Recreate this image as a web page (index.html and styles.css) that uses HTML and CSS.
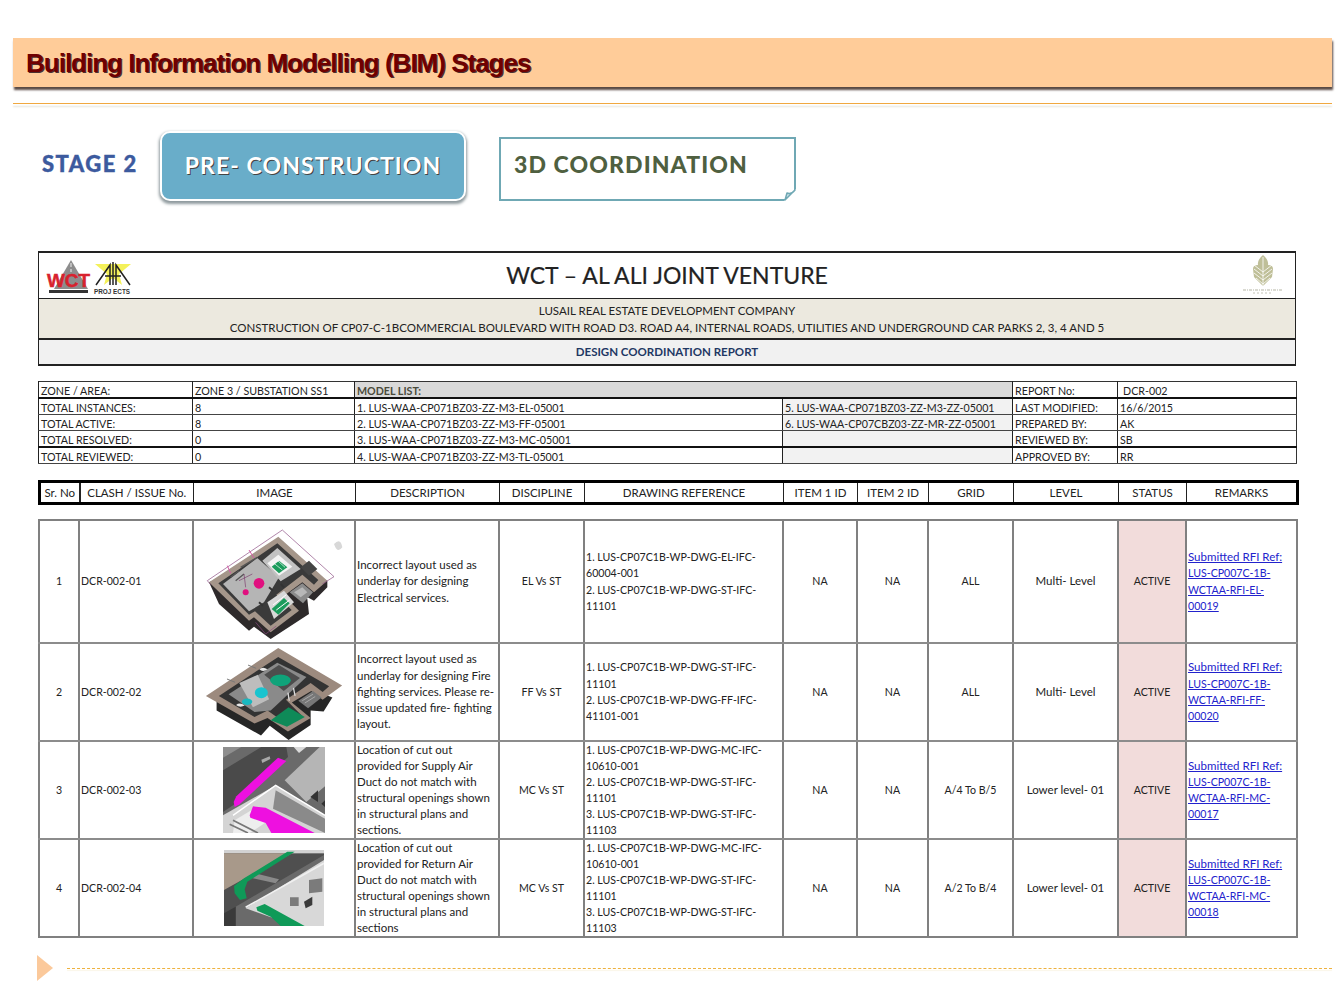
FILE: index.html
```html
<!DOCTYPE html>
<html lang="en">
<head>
    <meta charset="UTF-8">
    <title>Building Information Modelling (BIM) Stages</title>
    <link rel="stylesheet" href="styles.css">
</head>
<body>
    <div class="title-band">
        <h1>Building Information Modelling (BIM) Stages</h1>
    </div>
    <div class="title-rule"></div>

    <div class="stage-row">
        <div class="stage-label">STAGE 2</div>
        <div class="stage-pill">PRE- CONSTRUCTION</div>
        <div class="stage-note">
            3D COORDINATION
            <svg class="note-fold" width="12" height="12" viewBox="0 0 12 12">
                <path d="M0 12 L12 0 L12 12 Z" fill="#fff"/>
                <path d="M1 11 L3 4 Q7 6 11 1 Z" fill="#cfe3e8" stroke="#6fa8b4" stroke-width="1.5" stroke-linejoin="round"/>
            </svg>
        </div>
    </div>

    <div class="report">
        <div class="report-head">
            <div class="head-top">
                <div class="logos">
                    <svg width="92" height="38" viewBox="0 0 92 38">
                        <path d="M28 3 L45 32 L11 32 Z" fill="#8d8d8d"/>
                        <path d="M27.500 6 h1 v4 h-1 z M27.500 12 h1 v3 h-1 z" fill="#eee"/>
                        <text x="4" y="30" class="wct-mark" textLength="43" lengthAdjust="spacingAndGlyphs">WCT</text>
                        <rect x="6" y="33" width="39" height="3" fill="#333"/>
                        <path d="M52 7 L88 7 L76 17 L79 28 L70 21 L61 28 L64 17 Z" fill="#f4f15a"/>
                        <path d="M53 28 L67 8 L67 28 M73 28 L73 8 L87 28 M62 19 L78 19 M70 5 V28" fill="none" stroke="#222" stroke-width="1.5"/>
                        <text x="51" y="37" class="aha-mark" textLength="36" lengthAdjust="spacingAndGlyphs">PROJ ECTS</text>
                    </svg>
                </div>
                <div class="head-title">WCT – AL ALI JOINT VENTURE</div>
                <div class="palm-logo">
                    <svg width="46" height="42" viewBox="0 0 46 42">
                        <path d="M23 0 Q29 5 28 10 Q33 10 33 14 L32 22 L23 31 L14 22 L13 14 Q13 10 18 10 Q17 5 23 0 Z" fill="#bfbf98"/>
                        <path d="M23 2 V31 M14 10 L23 17 L32 10 M14 14 L23 21 L32 14 M14 18 L23 25 L32 18 M16 23 L23 29 L30 23" fill="none" stroke="#fff" stroke-width="0.8"/>
                        <path d="M3 35 H43" stroke="#b5b5a5" stroke-width="1" stroke-dasharray="3 1 1 1"/>
                        <path d="M13 38 H33" stroke="#c5c5b8" stroke-width="1" stroke-dasharray="2 2"/>
                    </svg>
                </div>
            </div>
            <div class="head-sub">
                LUSAIL REAL ESTATE DEVELOPMENT COMPANY<br>
                CONSTRUCTION OF CP07-C-1BCOMMERCIAL BOULEVARD WITH ROAD D3. ROAD A4, INTERNAL ROADS, UTILITIES AND UNDERGROUND CAR PARKS 2, 3, 4 AND 5
            </div>
            <div class="head-doc">DESIGN COORDINATION REPORT</div>
        </div>

        <table class="meta">
            <colgroup>
                <col class="m-a"><col class="m-b"><col class="m-c"><col class="m-d"><col class="m-e"><col class="m-f">
            </colgroup>
            <tr class="thick">
                <td>ZONE / AREA:</td>
                <td>ZONE 3 / SUBSTATION SS1</td>
                <td colspan="2" class="model-title">MODEL LIST:</td>
                <td>REPORT No:</td>
                <td class="indent">DCR-002</td>
            </tr>
            <tr>
                <td>TOTAL INSTANCES:</td>
                <td>8</td>
                <td>1. LUS-WAA-CP071BZ03-ZZ-M3-EL-05001</td>
                <td class="shade">5. LUS-WAA-CP071BZ03-ZZ-M3-ZZ-05001</td>
                <td>LAST MODIFIED:</td>
                <td>16/6/2015</td>
            </tr>
            <tr>
                <td>TOTAL ACTIVE:</td>
                <td>8</td>
                <td>2. LUS-WAA-CP071BZ03-ZZ-M3-FF-05001</td>
                <td class="shade">6. LUS-WAA-CP07CBZ03-ZZ-MR-ZZ-05001</td>
                <td>PREPARED BY:</td>
                <td>AK</td>
            </tr>
            <tr class="thick">
                <td>TOTAL RESOLVED:</td>
                <td>0</td>
                <td>3. LUS-WAA-CP071BZ03-ZZ-M3-MC-05001</td>
                <td class="shade"></td>
                <td>REVIEWED BY:</td>
                <td>SB</td>
            </tr>
            <tr>
                <td>TOTAL REVIEWED:</td>
                <td>0</td>
                <td>4. LUS-WAA-CP071BZ03-ZZ-M3-TL-05001</td>
                <td class="shade"></td>
                <td>APPROVED BY:</td>
                <td>RR</td>
            </tr>
        </table>

        <table class="grid-head">
            <colgroup>
                <col class="c1"><col class="c2"><col class="c3"><col class="c4"><col class="c5"><col class="c6"><col class="c7"><col class="c8"><col class="c9"><col class="c10"><col class="c11"><col class="c12">
            </colgroup>
            <tr>
                <th>Sr. No</th>
                <th>CLASH / ISSUE No.</th>
                <th>IMAGE</th>
                <th>DESCRIPTION</th>
                <th>DISCIPLINE</th>
                <th>DRAWING REFERENCE</th>
                <th>ITEM 1 ID</th>
                <th>ITEM 2 ID</th>
                <th>GRID</th>
                <th>LEVEL</th>
                <th>STATUS</th>
                <th>REMARKS</th>
            </tr>
        </table>

        <table class="grid-body">
            <colgroup>
                <col class="c1"><col class="c2"><col class="c3"><col class="c4"><col class="c5"><col class="c6"><col class="c7"><col class="c8"><col class="c9"><col class="c10"><col class="c11"><col class="c12">
            </colgroup>
            <tr class="row-a">
                <td>1</td>
                <td class="left">DCR-002-01</td>
                <td class="pic">
                    <svg width="150" height="115" viewBox="0 0 450 345">
                        <path d="M30 175 L60 240 L150 320 L165 308 L215 345 L330 270 L325 225 L290 200 L345 230 L385 190 L385 170 L240 100 Z" fill="#2e2a2b"/>
                        <path d="M238 38 L385 170 L345 205 L310 175 L255 215 L300 260 L215 325 L165 280 L150 290 L30 175 Z" fill="#a5968a"/>
                        <path d="M235 58 L358 168 L345 182 L310 152 L232 212 L278 258 L215 305 L168 262 L150 272 L58 178 Z" fill="#3a3a3a"/>
                        <path d="M175 102 L240 160 L195 235 L150 262 L72 180 Z" fill="#b5b5b5"/>
                        <path d="M190 110 L235 72 L305 135 L245 172 Z" fill="#c2c2c2"/>
                        <path d="M205 118 L238 92 L280 128 L240 155 Z" fill="#f4f4f4"/>
                        <path d="M218 128 L240 110 L265 130 L240 148 Z" fill="#1b9c5c"/>
                        <path d="M225 118 L250 138 M236 110 L258 130" stroke="#fff" stroke-width="2"/>
                        <path d="M205 235 L255 200 L285 235 L225 285 Z" fill="#d8d8d8"/>
                        <path d="M218 255 L255 222 L272 238 L238 272 Z" fill="#1b9c5c"/>
                        <path d="M222 243 L262 212 M232 258 L272 228" stroke="#fff" stroke-width="3"/>
                        <path d="M272 205 L310 178 L342 205 L312 238 Z" fill="#8b8b8b"/>
                        <path d="M285 205 L310 190 L325 205 L305 220 Z" fill="#b7b7b7"/>
                        <path d="M305 130 L330 110 L355 135 L330 155 Z" fill="#444"/>
                        <path d="M95 160 L120 140 M110 170 L135 150 M125 130 L175 100" stroke="#555" stroke-width="4"/>
                        <path d="M210 190 L222 200 M245 180 L255 190 M180 235 L192 245" stroke="#333" stroke-width="6"/>
                        <circle cx="180" cy="178" r="16" fill="#e0107f"/>
                        <circle cx="140" cy="205" r="9" fill="#e0107f"/>
                        <path d="M120 170 L160 150 M135 150 L140 190" stroke="#7c3b6d" stroke-width="2"/>
                        <path d="M25 170 L250 18 L405 158 L370 180 M25 170 L35 182 M170 295 L200 330 L232 306" fill="none" stroke="#8a4a80" stroke-width="2"/>
                        <path d="M150 78 L165 102 M85 125 L95 148" stroke="#d65aa8" stroke-width="3"/>
                        <path d="M405 60 Q425 40 430 70 Q415 90 405 60 Z" fill="#d8d8d8"/>
                    </svg>
                </td>
                <td class="left txt">Incorrect layout used as<br>underlay for designing<br>Electrical services.</td>
                <td>EL Vs ST</td>
                <td class="left">1. LUS-CP07C1B-WP-DWG-EL-IFC-<br>60004-001<br>2. LUS-CP07C1B-WP-DWG-ST-IFC-<br>11101</td>
                <td>NA</td>
                <td>NA</td>
                <td>ALL</td>
                <td class="txt">Multi- Level</td>
                <td class="status">ACTIVE</td>
                <td class="left"><a href="#"><span class="txt">Submitted RFI Ref:</span><br>LUS-CP007C-1B-<br>WCTAA-RFI-EL-<br>00019</a></td>
            </tr>
            <tr class="row-b">
                <td>2</td>
                <td class="left">DCR-002-02</td>
                <td class="pic">
                    <svg width="146" height="96" viewBox="0 0 450 296">
                        <path d="M48 175 L48 205 L185 282 L212 252 L270 296 L338 250 L338 205 L378 208 L405 165 L240 100 Z" fill="#262626"/>
                        <path d="M238 12 L435 128 L375 172 L340 145 L280 180 L338 228 L268 270 L205 228 L165 245 L15 160 Z" fill="#9c8a7e"/>
                        <path d="M238 40 L395 130 L375 148 L338 120 L262 172 L315 225 L268 250 L205 205 L165 225 L55 160 Z" fill="#333"/>
                        <path d="M85 155 L235 58 L325 102 L215 205 L165 210 Z" fill="#8a8a8a"/>
                        <path d="M195 95 L240 65 L305 105 L255 145 Z" fill="#4d4d4d"/>
                        <path d="M118 120 L175 95 L210 170 L160 195 Z" fill="#bdbdbd"/>
                        <ellipse cx="245" cy="112" rx="32" ry="18" fill="#0fa37a"/>
                        <ellipse cx="186" cy="150" rx="20" ry="17" fill="#19c4cf"/>
                        <ellipse cx="142" cy="178" rx="16" ry="10" fill="#19b8c0"/>
                        <path d="M215 235 L270 195 L320 225 L265 255 Z" fill="#0f8a58"/>
                        <path d="M300 175 L345 145 L372 165 L330 198 Z" fill="#777"/>
                        <path d="M312 175 L345 155 M320 182 L352 162" stroke="#aaa" stroke-width="3"/>
                        <path d="M180 78 Q190 68 205 78 Q190 88 180 78 Z M108 188 Q120 178 135 190 Q120 198 108 188 Z" fill="#e8e8e8"/>
                        <path d="M145 65 L170 75 M80 108 L105 118" stroke="#777" stroke-width="3"/>
                        <path d="M268 150 L272 175 M285 135 L290 160" stroke="#ddd" stroke-width="4"/>
                    </svg>
                </td>
                <td class="left txt">Incorrect layout used as<br>underlay for designing Fire<br>fighting services. Please re-<br>issue updated fire- fighting<br>layout.</td>
                <td>FF Vs ST</td>
                <td class="left">1. LUS-CP07C1B-WP-DWG-ST-IFC-<br>11101<br>2. LUS-CP07C1B-WP-DWG-FF-IFC-<br>41101-001</td>
                <td>NA</td>
                <td>NA</td>
                <td>ALL</td>
                <td class="txt">Multi- Level</td>
                <td class="status">ACTIVE</td>
                <td class="left"><a href="#"><span class="txt">Submitted RFI Ref:</span><br>LUS-CP007C-1B-<br>WCTAA-RFI-FF-<br>00020</a></td>
            </tr>
            <tr class="row-c">
                <td>3</td>
                <td class="left">DCR-002-03</td>
                <td class="pic">
                    <svg width="102" height="86" viewBox="0 0 306 258">
                        <rect width="306" height="258" fill="#6a6a6a"/>
                        <path d="M0 0 H55 L0 32 Z" fill="#8e8e8e"/>
                        <path d="M0 70 L115 0 H190 L195 30 L30 175 L0 195 Z" fill="#4a4a4a"/>
                        <path d="M32 165 L40 148 L165 32 L190 42 L50 172 L35 180 Z" fill="#ee10e0"/>
                        <path d="M115 38 L140 28 L142 36 L118 48 Z" fill="#a9a9a9"/>
                        <path d="M185 100 L290 0 H306 V118 L250 165 Z" fill="#b5b5b5"/>
                        <path d="M212 0 H250 L228 18 Z" fill="#dadada"/>
                        <path d="M0 205 L158 115 L306 205 V258 H0 Z" fill="#d4d4d4"/>
                        <path d="M158 130 L150 185 L306 258 V215 Z" fill="#8a8a8a"/>
                        <path d="M30 205 L158 115 L306 205" fill="none" stroke="#fff" stroke-width="4"/>
                        <path d="M35 220 L85 190 L130 225 L80 258 H30 Z" fill="#eeeeee"/>
                        <path d="M80 205 L90 178 L128 182 L275 258 H145 L128 228 L82 212 Z" fill="#ee10e0"/>
                        <path d="M30 220 L105 258 M20 232 L75 258" stroke="#777" stroke-width="5"/>
                        <path d="M262 150 L285 130 V165 Z M295 170 L306 160 V180 Z" fill="#333"/>
                    </svg>
                </td>
                <td class="left txt">Location of cut out<br>provided for Supply Air<br>Duct do not match with<br>structural openings shown<br>in structural plans and<br>sections.</td>
                <td>MC Vs ST</td>
                <td class="left">1. LUS-CP07C1B-WP-DWG-MC-IFC-<br>10610-001<br>2. LUS-CP07C1B-WP-DWG-ST-IFC-<br>11101<br>3. LUS-CP07C1B-WP-DWG-ST-IFC-<br>11103</td>
                <td>NA</td>
                <td>NA</td>
                <td>A/4 To B/5</td>
                <td class="txt">Lower level- 01</td>
                <td class="status">ACTIVE</td>
                <td class="left"><a href="#"><span class="txt">Submitted RFI Ref:</span><br>LUS-CP007C-1B-<br>WCTAA-RFI-MC-<br>00017</a></td>
            </tr>
            <tr class="row-c">
                <td>4</td>
                <td class="left">DCR-002-04</td>
                <td class="pic">
                    <svg width="100" height="76" viewBox="0 0 300 228">
                        <rect width="300" height="228" fill="#4f4f4f"/>
                        <rect width="300" height="10" fill="#d2d2d2"/>
                        <path d="M0 10 H205 L90 70 L0 120 Z" fill="#a8998a"/>
                        <path d="M85 68 L165 88 L155 100 L75 82 Z" fill="#8a8a8a"/>
                        <path d="M40 178 L300 25 V228 H235 Z" fill="#d8d8d8"/>
                        <path d="M35 170 L300 15 V30 L65 175 L215 228 H35 Z" fill="#6a6a6a"/>
                        <path d="M65 172 L300 40" stroke="#f0f0f0" stroke-width="5"/>
                        <path d="M0 190 L35 170 L35 228 H0 Z" fill="#3a3a3a"/>
                        <path d="M30 108 L60 85 L190 5 H212 L70 95 L62 118 L68 145 L48 150 L32 130 Z" fill="#0f9a58"/>
                        <path d="M97 172 L122 162 L242 228 H170 L140 200 L100 182 Z" fill="#0f9a58"/>
                        <path d="M198 142 H224 V168 H198 Z M255 90 L295 85 V125 L255 130 Z" fill="#7b7b7b"/>
                        <path d="M240 155 L265 140 V165 L245 175 Z" fill="#3a3a3a"/>
                    </svg>
                </td>
                <td class="left txt">Location of cut out<br>provided for Return Air<br>Duct do not match with<br>structural openings shown<br>in structural plans and<br>sections</td>
                <td>MC Vs ST</td>
                <td class="left">1. LUS-CP07C1B-WP-DWG-MC-IFC-<br>10610-001<br>2. LUS-CP07C1B-WP-DWG-ST-IFC-<br>11101<br>3. LUS-CP07C1B-WP-DWG-ST-IFC-<br>11103</td>
                <td>NA</td>
                <td>NA</td>
                <td>A/2 To B/4</td>
                <td class="txt">Lower level- 01</td>
                <td class="status">ACTIVE</td>
                <td class="left"><a href="#"><span class="txt">Submitted RFI Ref:</span><br>LUS-CP007C-1B-<br>WCTAA-RFI-MC-<br>00018</a></td>
            </tr>
        </table>
    </div>

    <div class="page-foot">
        <div class="foot-arrow"></div>
        <div class="foot-line"></div>
    </div>
</body>
</html>
```

FILE: styles.css
```css
* {
    box-sizing: border-box;
}

body {
    margin: 0;
    background-color: white;
    font-family: "Lato", "Liberation Sans", sans-serif;
    color: #222;
}

.title-band {
    height: 49px;
    margin: 38px 12px 0 13px;
    padding: 2px 0 0 13px;
    display: flex;
    align-items: center;
    background-color: #ffcc99;
    box-shadow: 1px 3px 2px #5a4a44;
}

h1 {
    margin: 0;
    font-family: "Liberation Sans", sans-serif;
    font-size: 26px;
    font-weight: bold;
    letter-spacing: -1px;
    color: #700000;
    text-shadow: 1px 1px 0 #4a3030;
}

.title-rule {
    height: 1px;
    margin: 16px 12px 0 13px;
    background-color: #f0a840;
    box-shadow: 0 3px 2px #dedcd0;
}

.stage-row {
    display: flex;
    align-items: flex-start;
    margin: 27px 0 0 42px;
}

.stage-label {
    width: 118px;
    margin-top: 19px;
    font-size: 22px;
    font-weight: 900;
    color: #3c5a9e;
    letter-spacing: 1.5px;
    -webkit-text-stroke: 0.4px #3c5a9e;
}

.stage-pill {
    width: 306px;
    height: 70px;
    padding-bottom: 2px;
    display: flex;
    align-items: center;
    justify-content: center;
    border: 2px solid white;
    border-radius: 10px;
    background-color: #69adc9;
    box-shadow: 0 2px 3px 1px #8f9a9e;
    font-size: 23px;
    font-weight: bold;
    color: white;
    letter-spacing: 1.1px;
    text-shadow: 1px 1px 0 #444;
}

.stage-note {
    position: relative;
    width: 297px;
    height: 64px;
    margin: 6px 0 0 33px;
    padding: 11px 0 0 13px;
    border: 2px solid #6fa8b4;
    font-size: 23px;
    font-weight: 900;
    color: #4f6040;
    letter-spacing: 1.1px;
    white-space: nowrap;
}

.note-fold {
    position: absolute;
    right: -2px;
    bottom: -2px;
}

.report {
    width: 1258px;
    margin: 50px 0 0 38px;
}

.report-head {
    border: 1px solid #222;
    border-top-width: 2px;
    border-bottom-width: 2px;
}

.head-top {
    height: 46px;
    display: grid;
    grid-template-columns: 1fr auto 1fr;
    align-items: center;
    border-bottom: 1px solid #222;
}

.logos {
    padding-left: 4px;
    display: flex;
}

.wct-mark {
    font-family: "Liberation Sans", sans-serif;
    font-size: 19px;
    font-weight: bold;
    fill: #d8222e;
    stroke: #d8222e;
    stroke-width: 0.5px;
}

.aha-mark {
    font-family: "Liberation Sans", sans-serif;
    font-size: 7px;
    font-weight: bold;
    fill: #333;
}

.head-title {
    padding-bottom: 2px;
    font-size: 23px;
    color: #222;
    -webkit-text-stroke: 0.2px #222;
}

.palm-logo {
    justify-self: end;
    padding-right: 9px;
    display: flex;
}

.head-sub {
    height: 41px;
    padding-top: 3px;
    background-color: #ece9df;
    border-bottom: 2px solid #222;
    text-align: center;
    font-size: 11.5px;
    line-height: 17px;
}

.head-doc {
    height: 24px;
    padding-bottom: 2px;
    display: flex;
    align-items: center;
    justify-content: center;
    background-color: #f1f1f1;
    font-size: 11.5px;
    font-weight: bold;
    color: #1f3864;
}

table {
    width: 1258px;
    table-layout: fixed;
    border-collapse: collapse;
    font-size: 10.6px;
}

.m-a { width: 154px; }
.m-b { width: 162px; }
.m-c { width: 428px; }
.m-d { width: 230px; }
.m-e { width: 105px; }
.m-f { width: 179px; }

.meta {
    margin-top: 15px;
    border: 1px solid #333;
    font-size: 10.7px;
}

.meta tr {
    height: 15px;
}

.meta td {
    padding: 2px 2px 0 2px;
    border-left: 1px solid #222;
    border-bottom: 1px solid #444;
    white-space: nowrap;
    line-height: 13px;
}

.meta tr.thick td {
    border-bottom: 2px solid #111;
}

.meta td.model-title {
    background-color: #d9d9d9;
    font-weight: bold;
    color: #4a4a3a;
}

.meta td.shade {
    background-color: #f2f2f2;
}

.meta td.indent {
    padding-left: 5px;
}

.c1 { width: 40px; }
.c2 { width: 114px; }
.c3 { width: 162px; }
.c4 { width: 144px; }
.c5 { width: 85px; }
.c6 { width: 199px; }
.c7 { width: 74px; }
.c8 { width: 71px; }
.c9 { width: 85px; }
.c10 { width: 105px; }
.c11 { width: 68px; }
.c12 { width: 111px; }

.grid-head {
    margin-top: 16px;
    border: 3px solid black;
}

.grid-head th {
    height: 22px;
    padding: 0;
    font-weight: normal;
    font-size: 11.5px;
    border-left: 1px solid #222;
    white-space: nowrap;
}

.grid-head th:nth-child(2) {
    border-left: 2px solid #222;
}

.grid-body {
    margin-top: 14px;
    border: 2px solid #808080;
}

.grid-body td {
    padding: 0 1px;
    border-left: 2px solid #808080;
    border-bottom: 2px solid #8c8c8c;
    text-align: center;
    line-height: 16.33px;
    white-space: nowrap;
}

.grid-body tr:last-child td {
    border-bottom: none;
}

.row-a {
    height: 123px;
}

.row-b {
    height: 98px;
}

.row-c {
    height: 98px;
}

.grid-body .row-c td {
    line-height: 16px;
}

.grid-body td.left {
    text-align: left;
}

.grid-body td.txt,
.grid-body span.txt {
    font-size: 11.5px;
}

.grid-body td.pic {
    padding: 0;
}

.pic svg {
    display: block;
    margin: 0 auto;
}

.grid-body td.status {
    background-color: #f2dcdb;
}

a {
    color: #2222cc;
    text-decoration: underline;
}

.page-foot {
    display: flex;
    align-items: center;
    margin: 17px 12px 0 37px;
}

.foot-arrow {
    width: 0;
    height: 0;
    border-top: 13px solid transparent;
    border-bottom: 13px solid transparent;
    border-left: 16px solid #fbc99b;
}

.foot-line {
    flex: 1;
    height: 1px;
    margin-left: 14px;
    border-top: 1px dashed #eeb23f;
    box-shadow: 0 2px 1px #faf5e6;
}
```
